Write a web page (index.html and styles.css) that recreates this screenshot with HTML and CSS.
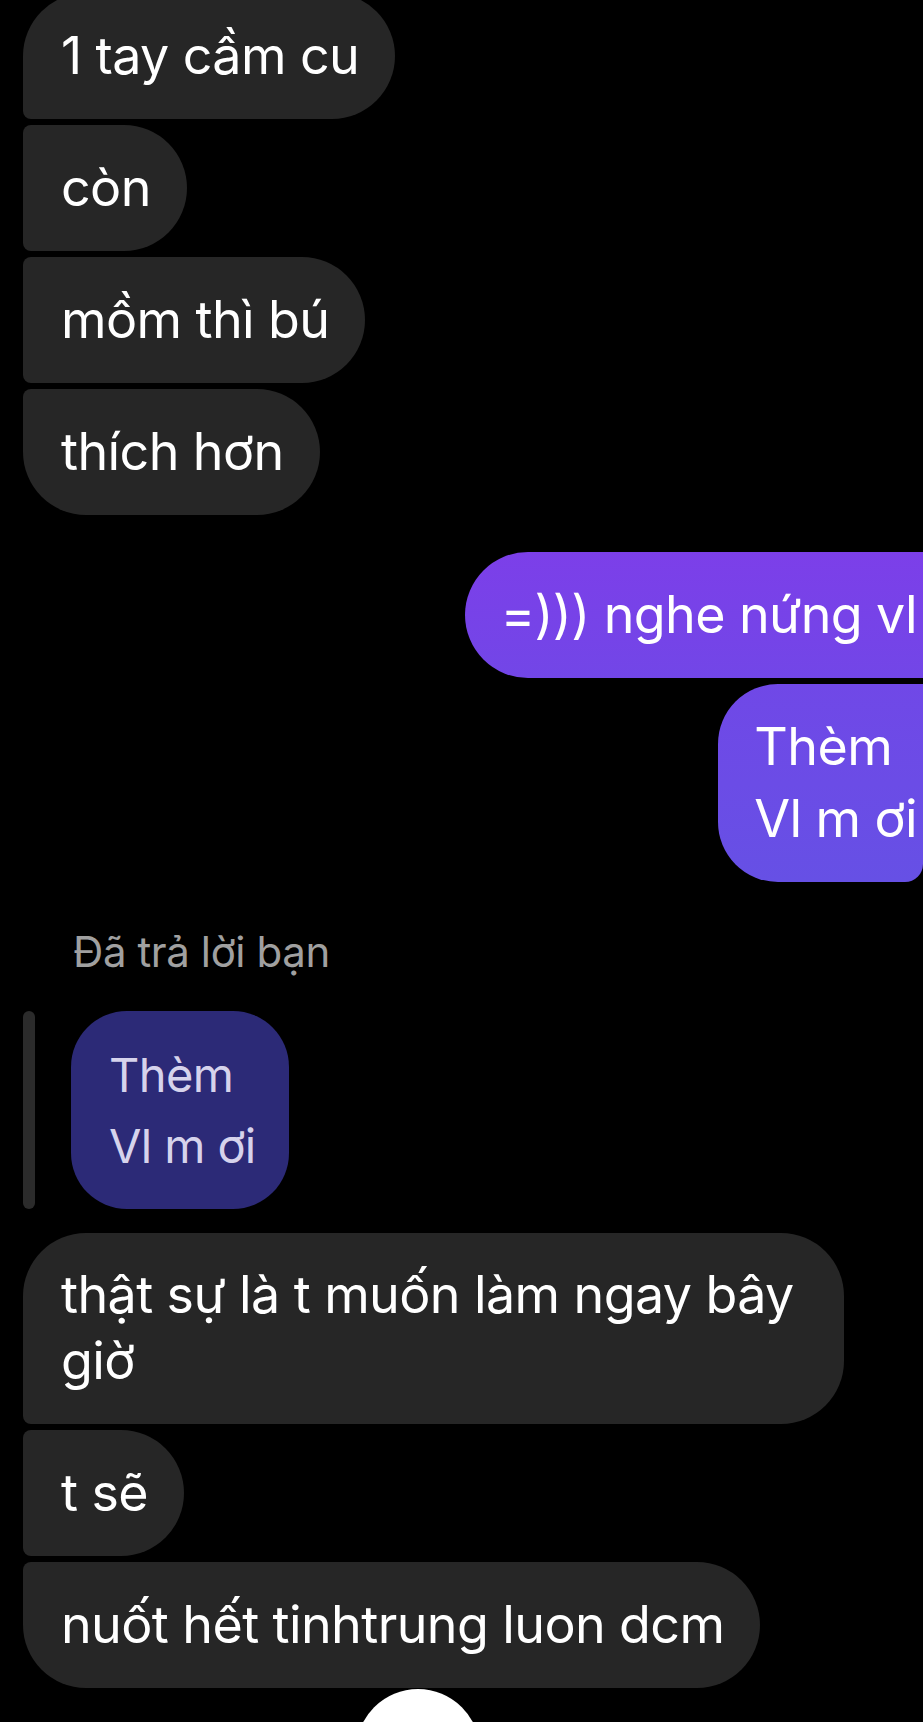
FILE: index.html
```html
<!DOCTYPE html>
<html lang="vi">
<head>
<meta charset="utf-8">
<title>Chat</title>
<link rel="stylesheet" href="styles.css">
</head>
<body>
<div class="thread">
  <div class="group in">
    <div class="bubble in first">1 tay cầm cu</div>
    <div class="bubble in">còn</div>
    <div class="bubble in">mồm thì bú</div>
    <div class="bubble in last">thích hơn</div>
  </div>

  <div class="group out">
    <div class="bubble out first">=))) nghe nứng vl</div>
    <div class="bubble out last">Thèm<br>Vl m ơi</div>
  </div>

  <div class="reply-label">Đã trả lời bạn</div>
  <div class="quote-row">
    <div class="quote-bar"></div>
    <div class="quote-bubble">Thèm<br>Vl m ơi</div>
  </div>

  <div class="group in after-quote">
    <div class="bubble in first wide">thật sự là t muốn làm ngay bây giờ</div>
    <div class="bubble in">t sẽ</div>
    <div class="bubble in last">nuốt hết tinhtrung luon dcm</div>
  </div>

  <div class="fab-wrap"><div class="fab"></div></div>
</div>
</body>
</html>
```
FILE: styles.css
```css
html, body {
  margin: 0;
  padding: 0;
  background: #000;
  height: 1722px;
  overflow: hidden;
}
body {
  font-family: "Inter", "Noto Sans", sans-serif;
  color: #fff;
}
.thread {
  display: flex;
  flex-direction: column;
  margin-top: -7px;
}
.group {
  display: flex;
  flex-direction: column;
}
.group.in {
  align-items: flex-start;
  gap: 6px;
  padding-left: 23px;
}
.group.out {
  align-items: flex-end;
  gap: 6px;
  margin-top: 37px;
}
.bubble {
  font-size: 52px;
  letter-spacing: -0.6px;
}
.bubble.in {
  background: #262626;
  line-height: 66px;
  padding: 30px 36px 30px 38px;
  border-radius: 8px 63px 63px 8px;
}
.bubble.in.first { border-top-left-radius: 63px; }
.bubble.in.last { border-bottom-left-radius: 63px; }
.bubble.in.wide {
  max-width: 747px;
  padding-top: 29px;
  padding-bottom: 30px;
}
.bubble.out {
  line-height: 72px;
  padding: 27px 6px 27px 36px;
  border-radius: 63px 0 0 63px;
}
.bubble.out.first {
  background: linear-gradient(180deg, #7c3fe9 0%, #7246e7 100%);
}
.bubble.out.last {
  background: linear-gradient(180deg, #7048e7 0%, #6650e5 100%);
  border-radius: 60px 0 18px 60px;
}
.reply-label {
  margin-top: 45px;
  padding-left: 73px;
  font-size: 42px;
  line-height: 50px;
  color: #a0a0a0;
  letter-spacing: -0.4px;
}
.quote-row {
  display: flex;
  gap: 36px;
  padding-left: 23px;
  margin-top: 34px;
}
.quote-bar {
  width: 12px;
  background: #2b2b2b;
  border-radius: 6px;
}
.quote-bubble {
  background: #2c2a77;
  color: #d6d3ec;
  font-size: 47px;
  line-height: 71px;
  letter-spacing: -0.6px;
  padding: 28px 33px 28px 38px;
  border-radius: 56px;
}
.group.after-quote {
  margin-top: 24px;
}
.fab-wrap {
  display: flex;
  padding-left: 356px;
  margin-top: 1px;
}
.fab {
  width: 124px;
  height: 124px;
  border-radius: 50%;
  background: #fff;
}
```
